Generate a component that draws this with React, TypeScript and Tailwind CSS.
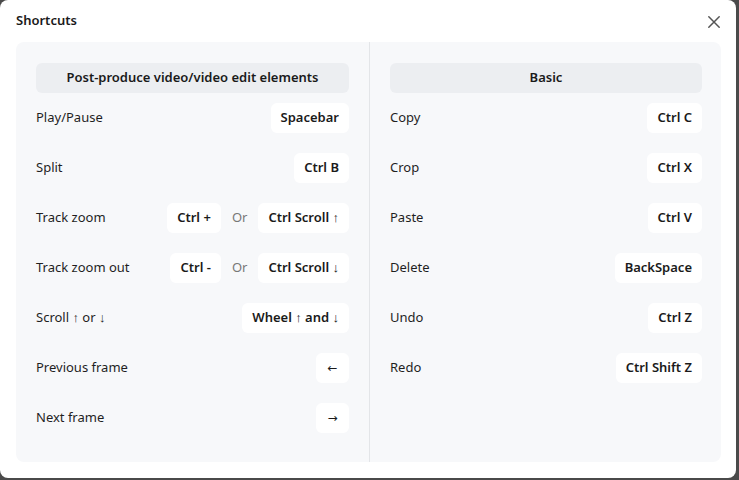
import React from "react";

const font = { fontFamily: '"Segoe UI", "Noto Sans", "Open Sans", sans-serif' };

function Key({ children }: { children: React.ReactNode }) {
  return (
    <span className="inline-flex h-[30px] items-center rounded-md bg-white px-[10px] text-[13px] font-semibold text-[#1a1a1a]">
      {children}
    </span>
  );
}

function Arrow({ children }: { children: React.ReactNode }) {
  return (
    <span className="inline-flex h-[30px] w-[33px] items-center justify-center rounded-md bg-white text-[12px] font-normal text-[#1a1a1a] [font-family:'DejaVu_Sans',sans-serif]">
      {children}
    </span>
  );
}

function Row({ label, keys }: { label: string; keys: React.ReactNode }) {
  return (
    <div className="flex h-[50px] items-center justify-between">
      <span className="text-[13px] text-[#1f1f1f]">{label}</span>
      <div className="flex items-center">{keys}</div>
    </div>
  );
}

function Or() {
  return <span className="mx-[11px] text-[13px] text-[#777]">Or</span>;
}

export default function App() {
  return (
    <div className="h-[480px] w-[739px] overflow-hidden bg-[#4a4a4a]" style={font}>
      <div className="flex h-[478px] w-[736px] flex-col rounded-lg bg-white">
        <div className="flex h-[42px] items-center justify-between pl-4 pr-[16px]">
          <span className="text-[13px] font-semibold text-[#1a1a1a]">Shortcuts</span>
          <svg width="14" height="14" viewBox="0 0 14 14" className="mr-[-1px] mt-[2px]">
            <path d="M1.8 1.8 L12.2 12.2 M12.2 1.8 L1.8 12.2" stroke="#555" strokeWidth="1.5" strokeLinecap="round" />
          </svg>
        </div>
        <div className="mx-4 flex h-[420px] w-[705px] rounded-lg bg-[#f7f8fa]">
          <div className="flex w-[354px] flex-col border-r border-[#e3e5e8] pb-[19px] pl-5 pr-[20px] pt-[21px]">
            <div className="flex h-[30px] items-center justify-center rounded-md bg-[#eceef1] text-[13px] font-semibold text-[#1a1a1a]">
              Post-produce video/video edit elements
            </div>
            <Row label="Play/Pause" keys={<Key>Spacebar</Key>} />
            <Row label="Split" keys={<Key>Ctrl B</Key>} />
            <Row label="Track zoom" keys={<><Key>Ctrl +</Key><Or /><Key>Ctrl Scroll ↑</Key></>} />
            <Row label="Track zoom out" keys={<><Key>Ctrl -</Key><Or /><Key>Ctrl Scroll ↓</Key></>} />
            <Row label="Scroll ↑ or ↓" keys={<Key>Wheel ↑ and ↓</Key>} />
            <Row label="Previous frame" keys={<Arrow>←</Arrow>} />
            <Row label="Next frame" keys={<Arrow>→</Arrow>} />
          </div>
          <div className="flex flex-1 flex-col pb-[19px] pl-5 pr-[19px] pt-[21px]">
            <div className="flex h-[30px] items-center justify-center rounded-md bg-[#eceef1] text-[13px] font-semibold text-[#1a1a1a]">
              Basic
            </div>
            <Row label="Copy" keys={<Key>Ctrl C</Key>} />
            <Row label="Crop" keys={<Key>Ctrl X</Key>} />
            <Row label="Paste" keys={<Key>Ctrl V</Key>} />
            <Row label="Delete" keys={<Key>BackSpace</Key>} />
            <Row label="Undo" keys={<Key>Ctrl Z</Key>} />
            <Row label="Redo" keys={<Key>Ctrl Shift Z</Key>} />
          </div>
        </div>
      </div>
    </div>
  );
}
